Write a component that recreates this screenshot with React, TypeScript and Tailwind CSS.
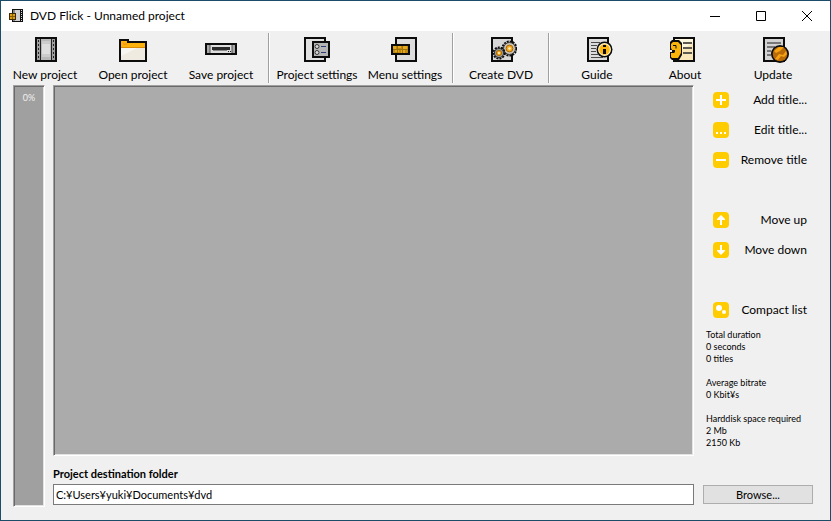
import type { ReactNode } from "react";

const film = (
  <>
    <rect x="6" y="3" width="22" height="25" fill="#0c0c0c" />
    <rect x="8" y="5" width="18" height="21" fill="#a0a0a0" />
    <rect x="11" y="5" width="1" height="21" fill="#222" />
    <rect x="22" y="5" width="1" height="21" fill="#222" />
    <rect x="12" y="5" width="10" height="21" fill="#b8b8b8" />
    <rect x="13" y="7" width="8" height="16" fill="#cccccc" />
    <rect x="13" y="10" width="8" height="10" fill="#dedede" />
    <path d="M9.5 6v20M24.5 6v20" stroke="#222" strokeWidth="1" strokeDasharray="2 2" />
  </>
);

const folder = (
  <>
    <path d="M2 5h10v2h18v21H2z" fill="#0c0c0c" />
    <path d="M4 7h6v2h18v5H4z" fill="#fdb10a" />
    <path d="M4 13h24v1H4z" fill="#d98a00" />
    <path d="M6 10h4" stroke="#f08c1c" />
    <rect x="4" y="14" width="24" height="12" fill="#efebe0" />
    <path d="M4 14h16L4 22z" fill="#f8f6f0" />
  </>
);

const drive = (
  <>
    <rect x="0" y="9" width="32" height="12" fill="#0c0c0c" />
    <rect x="2" y="11" width="28" height="8" fill="#a9a9a9" />
    <rect x="5" y="11" width="22" height="8" fill="#dedede" />
    <path d="M5 11v8M27 11v8" stroke="#555" />
    <rect x="7" y="13" width="18" height="3" fill="#2a2a2a" />
    <path d="M8 16.5h14" stroke="#8a8a8a" />
    <path d="M23 17.5h1M25 17.5h1" stroke="#222" />
  </>
);

const settings = (
  <>
    <rect x="3" y="3" width="22" height="25" fill="#0c0c0c" />
    <rect x="5" y="5" width="18" height="21" fill="#e0e0e0" />
    <rect x="11" y="7" width="18" height="17" fill="#0c0c0c" />
    <rect x="13" y="9" width="14" height="13" fill="#b5b5b5" />
    <circle cx="16" cy="12.5" r="2" fill="#d8d8d8" stroke="#333" />
    <circle cx="16" cy="18.5" r="2" fill="#d8d8d8" stroke="#333" />
    <path d="M20 12.5h5M20 18.5h5" stroke="#2b3e78" />
  </>
);

const menu = (
  <>
    <rect x="6" y="3" width="22" height="25" fill="#0c0c0c" />
    <rect x="8" y="5" width="18" height="21" fill="#dcdcdc" />
    <rect x="2" y="10" width="19" height="11" fill="#0c0c0c" />
    <rect x="4" y="12" width="15" height="7" fill="#c08a10" />
    <path d="M4 12h3v3H4zM9 12h3v2H9zM14 12h4v3h-4zM6 16h4v2H6zM12 16h4v3h-4z" fill="#e2a91c" />
    <path d="M8.5 12v7M13.5 12v7M4 15.5h15" stroke="#a0720c" strokeWidth="1" />
  </>
);

const gears = (
  <>
    <rect x="6" y="3" width="22" height="25" fill="#0c0c0c" />
    <rect x="8" y="5" width="18" height="21" fill="#d6d6d6" />
    <circle cx="24.5" cy="14.5" r="7" fill="none" stroke="#0c0c0c" strokeWidth="2" strokeDasharray="2 1" />
    <circle cx="24.5" cy="14.5" r="6" fill="#c9c2b5" stroke="#333" />
    <circle cx="24.5" cy="14.5" r="3.4" fill="#f7a81b" stroke="#a86a08" />
    <circle cx="24.5" cy="14.5" r="1.2" fill="#fff2cf" />
    <circle cx="14" cy="19" r="5.5" fill="none" stroke="#0c0c0c" strokeWidth="2" strokeDasharray="2 1" />
    <circle cx="14" cy="19" r="4.6" fill="#999" stroke="#333" />
    <circle cx="14" cy="19" r="2.6" fill="#f7a81b" stroke="#a86a08" />
    <circle cx="14" cy="19" r="1" fill="#fff2cf" />
  </>
);

const guide = (
  <>
    <rect x="6" y="3" width="22" height="25" fill="#0c0c0c" />
    <rect x="8" y="5" width="18" height="21" fill="#dcdcdc" />
    <path d="M10 8.5h9M10 11.5h6M10 14.5h5M10 17.5h5M10 20.5h7M10 23.5h12" stroke="#4a4a4a" />
    <circle cx="23.5" cy="15.5" r="8" fill="#0c0c0c" />
    <circle cx="23.5" cy="15.5" r="6.5" fill="#fff3c4" />
    <circle cx="23.5" cy="15.5" r="5.3" fill="#fdb813" />
    <path d="M22 11h3v2h-3zM22 15h3v5h-3z" fill="#0c0c0c" />
  </>
);

const about = (
  <>
    <rect x="4" y="3" width="22" height="25" fill="#0c0c0c" />
    <rect x="6" y="5" width="18" height="21" fill="#fbe7b8" />
    <path d="M6 5h18v4L6 20z" fill="#fff6df" />
    <path d="M14 9h9M14 14h9M14 19h9" stroke="#5d5850" strokeWidth="2" />
    <path d="M3 6h7l3 3v12l-3 5H3l-2-2v-6h2v-2H1V8z" fill="#0c0c0c" />
    <path d="M4 8h5l3 3v8l-3 5H3l-1-1v-4h3l1-1v-2H3l-1-2v-4z" fill="#f9b50b" />
    <path d="M4 11.5h3v3" fill="none" stroke="#0c0c0c" />
  </>
);

const update = (
  <>
    <rect x="6" y="3" width="22" height="25" fill="#0c0c0c" />
    <rect x="8" y="5" width="18" height="21" fill="#d2d2d2" />
    <path d="M10 9h14M10 13h8M10 17h4M10 21h4" stroke="#777" strokeWidth="2" />
    <circle cx="23" cy="20" r="9" fill="#0c0c0c" />
    <circle cx="23" cy="20" r="7.3" fill="#b8690a" />
    <path d="M17 17l5-4h5l-4 4-4 2zM18 25l4-5 4 1 3-4 1 3-3 3-3-1-3 4z" fill="#f5a313" />
  </>
);

const tools: ({ label: string; icon: ReactNode } | null)[] = [
  { label: "New project", icon: film },
  { label: "Open project", icon: folder },
  { label: "Save project", icon: drive },
  null,
  { label: "Project settings", icon: settings },
  { label: "Menu settings", icon: menu },
  null,
  { label: "Create DVD", icon: gears },
  null,
  { label: "Guide", icon: guide },
  { label: "About", icon: about },
  { label: "Update", icon: update },
];

const actionGroups = [
  [
    { label: "Add title...", icon: <path d="M8 3v10M3 8h10" stroke="#fff" strokeWidth="2" /> },
    { label: "Edit title...", icon: <path d="M3 10h2v2H3zM7 10h2v2H7zM11 10h2v2h-2z" fill="#fff" /> },
    { label: "Remove title", icon: <path d="M3 8h10" stroke="#fff" strokeWidth="2" /> },
  ],
  [
    { label: "Move up", icon: <path d="M8 3l4 4v1H9v5H7V8H4V7z" fill="#fff" /> },
    { label: "Move down", icon: <path d="M8 13l4-4V8H9V3H7v5H4v1z" fill="#fff" /> },
  ],
  [
    {
      label: "Compact list",
      icon: (
        <>
          <circle cx="6" cy="6" r="3" fill="#fff" />
          <circle cx="11" cy="10" r="2" fill="#fff" />
        </>
      ),
    },
  ],
];

const stats = [
  { name: "Total duration", values: ["0 seconds", "0 titles"] },
  { name: "Average bitrate", values: ["0 Kbit¥s"] },
  { name: "Harddisk space required", values: ["2 Mb", "2150 Kb"] },
];

const sunken =
  "border border-t-[#a0a0a0] border-l-[#a0a0a0] border-r-white border-b-white shadow-[inset_1px_1px_#696969,inset_-1px_-1px_#e3e3e3]";

function TitleBar() {
  return (
    <header className="flex h-[30px] shrink-0 items-center bg-white pl-2">
      <svg width="16" height="16" viewBox="0 0 16 16" shapeRendering="crispEdges" aria-hidden="true">
        <rect x="3" y="1" width="11" height="13" fill="#111" />
        <rect x="6" y="2" width="5" height="11" fill="#d0d0d0" />
        <rect x="4" y="2" width="2" height="11" fill="#888" />
        <path d="M12.5 2v12" stroke="#ddd" strokeDasharray="1 1" />
        <rect x="0" y="5" width="7" height="7" fill="#3a2a08" />
        <rect x="1" y="6" width="5" height="5" fill="#e0a010" />
        <path d="M1 8.5h5M3.5 6v5" stroke="#8a5c00" />
      </svg>
      <h1 className="flex-1 pl-[5px] text-[12px]">DVD Flick - Unnamed project</h1>
      <button type="button" aria-label="Minimize" className="flex h-full w-[46px] items-center justify-center">
        <svg width="10" height="10" viewBox="0 0 10 10">
          <path d="M0 5.5h10" stroke="#000" />
        </svg>
      </button>
      <button type="button" aria-label="Maximize" className="flex h-full w-[46px] items-center justify-center">
        <svg width="10" height="10" viewBox="0 0 10 10">
          <path d="M.5.5h9v9h-9z" fill="none" stroke="#000" />
        </svg>
      </button>
      <button type="button" aria-label="Close" className="flex h-full w-[46px] items-center justify-center">
        <svg width="10" height="10" viewBox="0 0 10 10">
          <path d="M0 0l10 10M10 0L0 10" stroke="#000" />
        </svg>
      </button>
    </header>
  );
}

function Toolbar() {
  return (
    <nav className="flex h-[54px] shrink-0">
      {tools.map((tool, i) =>
        tool ? (
          <button key={i} type="button" className="flex w-[88px] flex-col items-center pt-[3px]">
            <svg width="32" height="32" viewBox="0 0 32 32" aria-hidden="true">
              {tool.icon}
            </svg>
            <span className="text-[12px] leading-[18px] whitespace-nowrap">{tool.label}</span>
          </button>
        ) : (
          <div key={i} className="flex w-2 justify-center py-0.5">
            <div className="w-0.5 border-l border-[#a0a0a0] bg-white" />
          </div>
        )
      )}
    </nav>
  );
}

function SidePanel() {
  return (
    <aside className="w-[110px] shrink-0">
      <div className="flex flex-col gap-[30px] pr-1.5 pl-2.5">
        {actionGroups.map((group, i) => (
          <div key={i}>
            {group.map((action) => (
              <button
                key={action.label}
                type="button"
                className="flex h-[30px] w-full items-center justify-between text-[12px] whitespace-nowrap"
              >
                <svg width="16" height="16" viewBox="0 0 16 16" className="rounded bg-[#ffcc00]" aria-hidden="true">
                  {action.icon}
                </svg>
                {action.label}
              </button>
            ))}
          </div>
        ))}
      </div>
      <dl className="flex flex-col gap-3 pt-1 pl-[3px] text-[9px] leading-[12px] whitespace-nowrap">
        {stats.map((stat) => (
          <div key={stat.name}>
            <dt>{stat.name}</dt>
            {stat.values.map((value) => (
              <dd key={value}>{value}</dd>
            ))}
          </div>
        ))}
      </dl>
    </aside>
  );
}

export default function App() {
  return (
    <div className="flex min-h-screen flex-col border border-[#1b4d6b] bg-[#f0f0f0] font-['Lato','Noto_Sans_CJK_JP',sans-serif] text-black">
      <TitleBar />
      <Toolbar />
      <main className="flex flex-1 gap-2 pr-[17px] pb-[13px] pl-3">
        <div className={`w-8 shrink-0 bg-[#a0a0a0] pt-1.5 text-center text-[9px] leading-[12px] text-[#f0f0f0] ${sunken}`}>
          0%
        </div>
        <div className="flex min-w-0 flex-1 flex-col">
          <div className="flex flex-1 gap-[9px]">
            <div className={`flex-1 bg-[#ababab] ${sunken}`} />
            <SidePanel />
          </div>
          <label htmlFor="destination" className="mt-2.5 text-[11px] leading-[16px] font-bold">
            Project destination folder
          </label>
          <div className="mt-0.5 mb-0.5 flex items-center gap-[9px]">
            <input
              id="destination"
              type="text"
              defaultValue="C:¥Users¥yuki¥Documents¥dvd"
              className="h-[21px] min-w-0 flex-1 border border-[#7a7a7a] bg-white px-0.5 text-[11px]"
            />
            <button type="button" className="h-[19px] w-[110px] border border-[#adadad] bg-[#e1e1e1] text-[11px] leading-[16px]">
              Browse...
            </button>
          </div>
        </div>
      </main>
    </div>
  );
}
